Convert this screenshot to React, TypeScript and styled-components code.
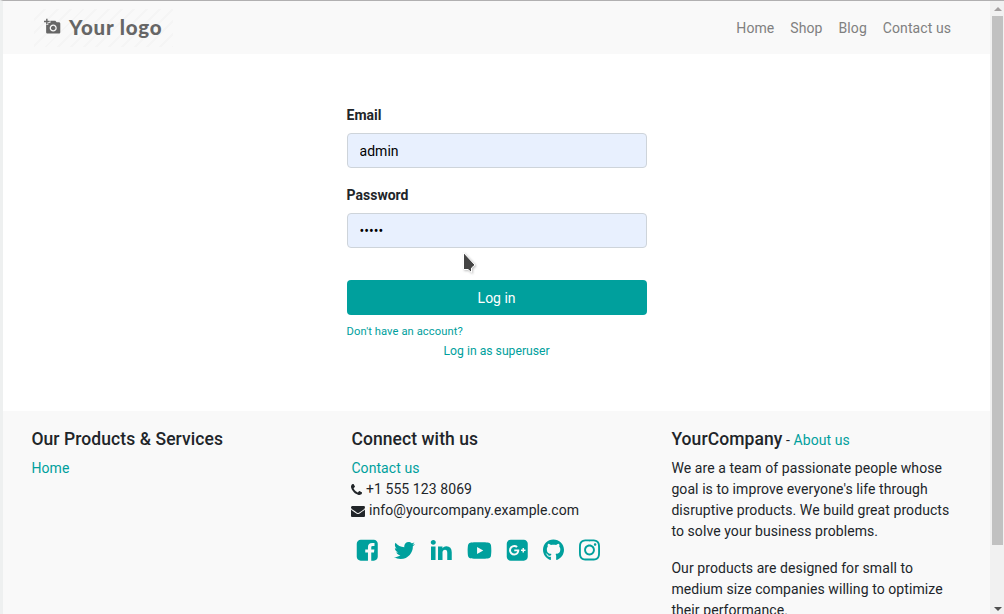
import React from "react";
import styled, { createGlobalStyle } from "styled-components";
import { FaTwitter, FaYoutube, FaGithub, FaInstagram } from "react-icons/fa";
import { MdAddAPhoto } from "react-icons/md";

const teal = "#00a09d";
const ink = "#212529";

const GlobalStyle = createGlobalStyle`
  *, *::before, *::after { box-sizing: border-box; }
  body {
    margin: 0;
    overflow: hidden;
    background: #fff;
    color: ${ink};
    font: 14px/21px Roboto, "Liberation Sans", sans-serif;
  }
  a { color: ${teal}; text-decoration: none; }
`;

const Window = styled.div`
  display: flex;
  height: 614px;
  overflow: hidden;
  border-top: 1px solid #b1b0b1;
  border-left: 3px solid #eef0f0;
  position: relative;
`;

const Page = styled.div`
  display: flex;
  flex-direction: column;
  width: 987px;
  height: 613px;
  overflow: hidden;
`;

const Navbar = styled.header`
  display: flex;
  flex: none;
  align-items: center;
  justify-content: space-between;
  height: 53px;
  padding: 0 39px 0 31px;
  background: #f9f9f9;
`;

const Logo = styled.a`
  display: flex;
  align-items: center;
  width: 139px;
  height: 38px;
  padding: 0 0 2px 10px;
  font: 900 20.5px/36px Lato, sans-serif;
  letter-spacing: 0.8px;
  white-space: nowrap;
  background: repeating-linear-gradient(135deg, #f9f9f9 0 7px, #f5f5f5 7px 9px);

  && { color: #666; }
  svg { margin-right: 8px; }
`;

const Nav = styled.nav`
  display: flex;
  gap: 16px;
  padding-top: 1px;
  letter-spacing: 0.08px;

  a { color: #808080; }
`;

const Main = styled.main`
  flex: none;
  height: 357px;
  padding-top: 51px;
`;

const Form = styled.form`
  display: flex;
  flex-direction: column;
  width: 300px;
  margin-left: 343.6px;
`;

const Label = styled.label`
  height: 21px;
  margin-bottom: 7px;
  font-weight: 700;
`;

const Field = styled.input`
  height: 35px;
  margin: 0 0 17px;
  padding: 6px 12px;
  border: 1px solid #ced4da;
  border-radius: 4px;
  outline: none;
  background: #e8f0fe;
  color: #000;
  font: 14px/21px Roboto, sans-serif;
`;

const Submit = styled.button`
  height: 35px;
  margin: 15px 0 0;
  padding: 1px 0 0;
  border: 0;
  border-radius: 4px;
  background: ${teal};
  color: #fff;
  font: 14px/21px Roboto, sans-serif;
`;

const SmallLink = styled.a<{ $center?: boolean }>`
  height: 20px;
  margin-top: ${(p) => (p.$center ? -1 : 7)}px;
  align-self: ${(p) => (p.$center ? "center" : "flex-start")};
  font-size: ${(p) => (p.$center ? 12.2 : 11.2)}px;
  letter-spacing: ${(p) => (p.$center ? 0 : 0.08)}px;
  line-height: 20px;
`;

const Footer = styled.footer`
  display: grid;
  flex: none;
  grid-template-columns: 320px 320px 300px;
  height: 300px;
  padding: 18px 0 0 28.4px;
  background: #f9f9f9;
  letter-spacing: 0.08px;
`;

const Column = styled.section`
  padding-right: 10px;
`;

const Heading = styled.h5`
  display: inline-block;
  margin: 0 0 8px;
  font-size: 17.5px;
  font-weight: 500;
  line-height: 21px;
`;

const Line = styled.div`
  display: flex;
  align-items: center;
  height: 21px;
`;

const Glyph = styled.svg`
  flex: none;
  fill: currentColor;
`;

const Socials = styled.div`
  display: flex;
  align-items: center;
  height: 24px;
  margin: 17px 0 0 5.6px;
  color: ${teal};
`;

const Social = styled.a<{ $w: number }>`
  display: flex;
  justify-content: center;
  width: ${(p) => p.$w}px;
  margin-right: 15px;
`;

const Paragraph = styled.p`
  margin: 0 0 16px;
  white-space: nowrap;
`;

const Scrollbar = styled.div`
  display: flex;
  flex-direction: column;
  align-items: center;
  width: 14px;
  height: 613px;
  padding: 6px 1px 3px 2px;
  background: #f1f1f1;
`;

const Arrow = styled.span<{ $down?: boolean }>`
  width: 0;
  height: 0;
  border: 4px solid transparent;
  ${(p) =>
    p.$down
      ? "border-top-color: #505050; border-bottom: 0; margin-top: auto;"
      : "border-bottom-color: #a3a0a0; border-top: 0;"}
`;

const Thumb = styled.span`
  width: 11px;
  height: 529px;
  margin-top: 5px;
  background: #c1c1c1;
`;

const Pointer = styled.svg`
  position: absolute;
  left: 459px;
  top: 249px;
  filter: drop-shadow(1px 1px 1px rgba(0, 0, 0, 0.25));
`;

const shapes = {
  facebook:
    "M1376 128q119 0 203.5 84.5t84.5 203.5v960q0 119-84.5 203.5t-203.5 84.5h-188v-595h199l30-232h-229v-148q0-56 23.5-84t91.5-28l122-1v-207q-63-9-178-9-136 0-217.5 80t-81.5 226v171h-200v232h200v595h-532q-119 0-203.5-84.5t-84.5-203.5v-960q0-119 84.5-203.5t203.5-84.5h960z",
  linkedin:
    "M477 625v991h-330v-991h330zm21-306q1 73-50.5 122t-135.5 49h-2q-82 0-132-49t-50-122q0-74 51.5-122.5t134.5-48.5 133 48.5 51 122.5zm1166 729v568h-329v-530q0-105-40.5-164.5t-126.5-59.5q-63 0-105.5 34.5t-63.5 85.5q-11 30-11 81v553h-329q2-399 2-647t-1-296l-1-48h329v144h-2q20-32 41-56t56.5-52 87-43.5 114.5-15.5q171 0 275 113.5t104 332.5z",
  googlePlus:
    "M1045 905q0-26-6-64h-362v132h217q-3 24-16.5 50t-37.5 53-66.5 44.5-96.5 17.5q-99 0-169-71t-70-171 70-171 169-71q92 0 153 59l104-101q-108-100-257-100-160 0-272 112.5t-112 271.5 112 271.5 272 112.5q165 0 266.5-105t101.5-270zm345 46h109v-110h-109v-110h-110v110h-110v110h110v110h110v-110zm274-535v960q0 119-84.5 203.5t-203.5 84.5h-960q-119 0-203.5-84.5t-84.5-203.5v-960q0-119 84.5-203.5t203.5-84.5h960q119 0 203.5 84.5t84.5 203.5z",
};

function SocialGlyph({ name }: { name: keyof typeof shapes }) {
  return (
    <Glyph width="24.5" height="24.5" viewBox="0 0 1792 1792">
      <path d={shapes[name]} />
    </Glyph>
  );
}

export default function App() {
  return (
    <>
      <GlobalStyle />
      <Window>
        <Page>
          <Navbar>
            <Logo>
              <MdAddAPhoto size={17} />
              Your logo
            </Logo>
            <Nav>
              <a>Home</a>
              <a>Shop</a>
              <a>Blog</a>
              <a>Contact us</a>
            </Nav>
          </Navbar>
          <Main>
            <Form>
              <Label htmlFor="login">Email</Label>
              <Field id="login" defaultValue="admin" />
              <Label htmlFor="password">Password</Label>
              <Field id="password" type="password" defaultValue="admin" />
              <Submit type="button">Log in</Submit>
              <SmallLink>Don't have an account?</SmallLink>
              <SmallLink $center>Log in as superuser</SmallLink>
            </Form>
          </Main>
          <Footer>
            <Column>
              <Heading>Our Products &amp; Services</Heading>
              <Line>
                <a>Home</a>
              </Line>
            </Column>
            <Column>
              <Heading>Connect with us</Heading>
              <Line>
                <a>Contact us</a>
              </Line>
              <Line>
                <Glyph width="11" height="14" viewBox="0 0 1408 1792">
                  <path d="M1408 1240q0 27-10 70.5t-21 68.5q-21 50-122 106-94 51-186 51-27 0-53-3.5t-57.5-12.5-47-14.5-55.5-20.5-49-18q-98-35-175-83-127-79-264-216t-216-264q-48-77-83-175-3-9-18-49t-20.5-55.5-14.5-47-12.5-57.5-3.5-53q0-92 51-186 56-101 106-122 25-11 68.5-21t70.5-10q14 0 21 3 18 6 53 76 11 19 30 54t35 63.5 31 53.5q3 4 17.5 25t21.5 35.5 7 28.5q0 20-28.5 50t-62 55-62 53-28.5 46q0 9 5 22.5t8.5 20.5 14 24 11.5 19q76 137 174 235t235 174q2 1 19 11.5t24 14 20.5 8.5 22.5 5q18 0 46-28.5t53-62 55-62 50-28.5q14 0 28.5 7t35.5 21.5 25 17.5q25 15 53.5 31t63.5 35 54 30q70 35 76 53 3 7 3 21z" />
                </Glyph>
                &nbsp;+1 555 123 8069
              </Line>
              <Line>
                <Glyph width="14" height="14" viewBox="0 0 1792 1792">
                  <path d="M1792 710v794q0 66-47 113t-113 47h-1472q-66 0-113-47t-47-113v-794q44 49 101 87 362 246 497 345 57 42 92.5 65.5t94.5 48 110 24.5h2q51 0 110-24.5t94.5-48 92.5-65.5q170-123 498-345 57-39 100-87zm0-294q0 79-49 151t-122 123q-376 261-468 325-10 7-42.5 31t-54 38.5-52 32.5-57.5 27-50 9h-2q-23 0-50-9t-57.5-27-52-32.5-54-38.5-42.5-31q-91-64-262-182.5t-205-142.5q-62-42-117-115.5t-55-136.5q0-78 41.5-130t118.5-52h1472q65 0 112.5 47t47.5 113z" />
                </Glyph>
                &nbsp;info@yourcompany.example.com
              </Line>
              <Socials>
                <Social $w={21}><SocialGlyph name="facebook" /></Social>
                <Social $w={23}><FaTwitter size={21} /></Social>
                <Social $w={21}><SocialGlyph name="linkedin" /></Social>
                <Social $w={25}><FaYoutube size={25} /></Social>
                <Social $w={21}><SocialGlyph name="googlePlus" /></Social>
                <Social $w={21}><FaGithub size={22} /></Social>
                <Social $w={21}><FaInstagram size={24} /></Social>
              </Socials>
            </Column>
            <Column>
              <Heading>YourCompany</Heading> - <a>About us</a>
              <Paragraph>
                We are a team of passionate people whose
                <br />
                goal is to improve everyone's life through
                <br />
                disruptive products. We build great products
                <br />
                to solve your business problems.
              </Paragraph>
              <Paragraph>
                Our products are designed for small to
                <br />
                medium size companies willing to optimize
                <br />
                their performance.
              </Paragraph>
            </Column>
          </Footer>
        </Page>
        <Scrollbar>
          <Arrow />
          <Thumb />
          <Arrow $down />
        </Scrollbar>
        <Pointer width="16" height="24" viewBox="0 0 16 24">
          <path
            d="M1.5 2.5V19.5H6l3.5 3V18l3.5-3z"
            fill="#444"
            stroke="#fff"
            strokeWidth="1"
          />
        </Pointer>
      </Window>
    </>
  );
}
